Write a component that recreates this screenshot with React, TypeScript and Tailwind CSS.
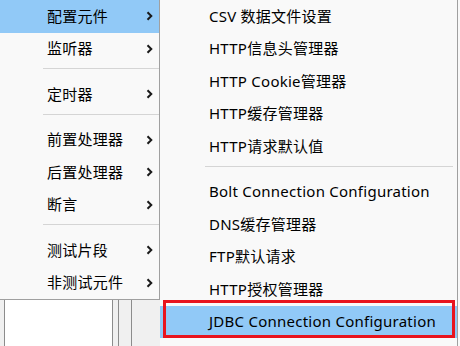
import React from 'react';

const font = { fontFamily: '"Noto Sans", "Noto Sans CJK SC", sans-serif' };

type Entry = { label: string; sub?: boolean; sep?: boolean; active?: boolean };

const leftItems: Entry[] = [
    { label: '配置元件', sub: true, active: true },
    { label: '监听器', sub: true },
    { label: '', sep: true },
    { label: '定时器', sub: true },
    { label: '', sep: true },
    { label: '前置处理器', sub: true },
    { label: '后置处理器', sub: true },
    { label: '断言', sub: true },
    { label: '', sep: true },
    { label: '测试片段', sub: true },
    { label: '非测试元件', sub: true },
];

const rightItems: Entry[] = [
    { label: 'CSV 数据文件设置' },
    { label: 'HTTP信息头管理器' },
    { label: 'HTTP Cookie管理器' },
    { label: 'HTTP缓存管理器' },
    { label: 'HTTP请求默认值' },
    { label: '', sep: true },
    { label: 'Bolt Connection Configuration' },
    { label: 'DNS缓存管理器' },
    { label: 'FTP默认请求' },
    { label: 'HTTP授权管理器' },
    { label: 'JDBC Connection Configuration', active: true },
];

function Chevron() {
    return (
        <svg width="7" height="10" viewBox="0 0 7 10" className="shrink-0">
            <path d="M1.5 1.2 L5.3 5 L1.5 8.8" fill="none" stroke="#1a1a1a" strokeWidth="2" />
        </svg>
    );
}

export default function App() {
    return (
        <div className="w-[460px] h-[346px] overflow-hidden bg-[#f9f9f9] text-[15px] tracking-[0.25px] text-black relative flex" style={font}>
            {/* left menu + window frame below */}
            <div className="w-[160px] flex flex-col shrink-0">
                <div className="h-[300px] bg-[#f9f9f9] border-r border-b border-[#a0a0a0] flex flex-col">
                    {leftItems.map((it, i) =>
                        it.sep ? (
                            <div key={i} className="h-[13px] pt-[3px] pl-[43px]">
                                <div className="h-px bg-[#d5d5d5]"></div>
                            </div>
                        ) : (
                            <div
                                key={i}
                                className={`h-[32.5px] shrink-0 flex items-center justify-between pl-[47px] pr-[6px] ${it.active ? 'bg-[#91c9f7]' : ''}`}
                            >
                                <span className="leading-none">{it.label}</span>
                                {it.sub && <Chevron />}
                            </div>
                        )
                    )}
                </div>
                <div className="flex-1 flex bg-[#f0f0f0]">
                    <div className="w-[4px]"></div>
                    <div className="w-[109px] bg-white border-x border-[#8c8c8c]"></div>
                    <div className="w-[5px]"></div>
                    <div className="w-[14px] border-x border-[#8c8c8c]"></div>
                </div>
            </div>

            {/* submenu */}
            <div className="w-[298px] shrink-0 h-[346px] bg-[#f9f9f9] border-r border-[#a0a0a0] flex flex-col">
                {rightItems.map((it, i) =>
                    it.sep ? (
                        <div key={i} className="h-[13px] shrink-0 pt-[3px] pl-[45px] pr-[4px]">
                            <div className="h-px bg-[#d5d5d5]"></div>
                        </div>
                    ) : (
                        <div
                            key={i}
                            className={`h-[32.5px] shrink-0 flex items-center pl-[49px] ${it.active ? 'bg-[#91c9f7]' : ''}`}
                        >
                            <span className="leading-none whitespace-nowrap">{it.label}</span>
                        </div>
                    )
                )}
            </div>
            <div className="flex-1 bg-[#f9f9f9]"></div>

            {/* red annotation box */}
            <div className="absolute left-[163px] top-[300px] w-[292px] h-[38px] border-[3px] border-[#e8141e]"></div>
        </div>
    );
}
